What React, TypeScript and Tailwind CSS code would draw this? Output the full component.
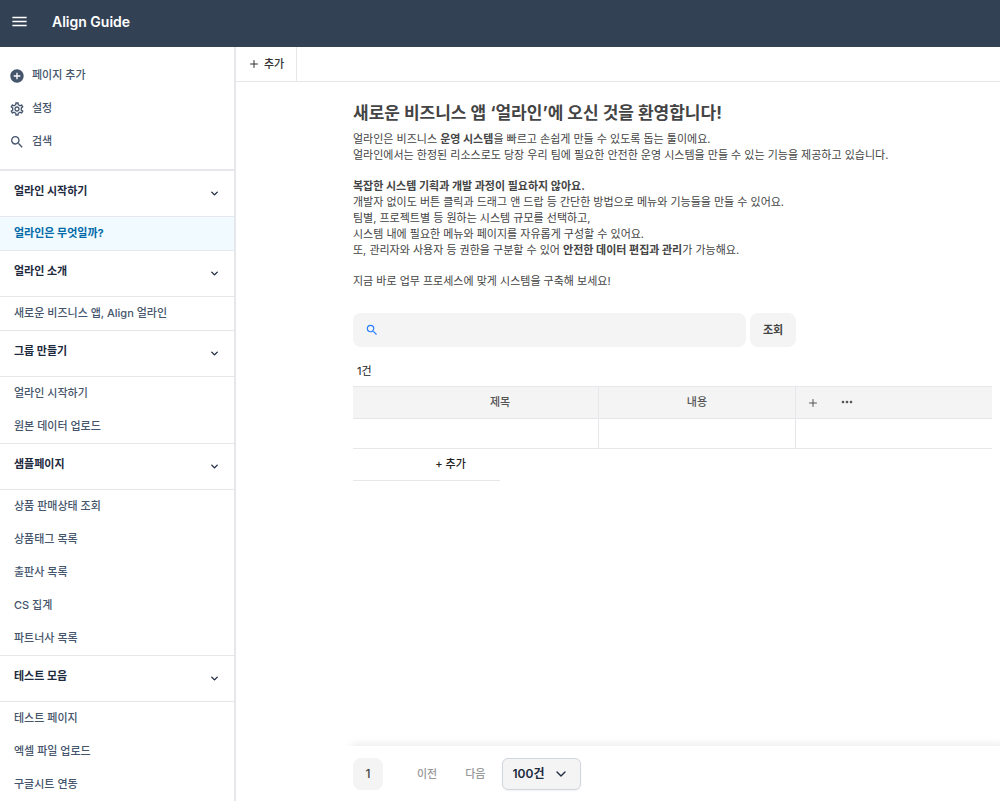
import { useState } from 'react';
import clsx from 'clsx';
import { MdAddCircle, MdMenu, MdMoreHoriz, MdOutlineSettings, MdSearch } from 'react-icons/md';
import { ChevronDown, Plus } from 'lucide-react';

const actions = [
  { label: '페이지 추가', Icon: MdAddCircle },
  { label: '설정', Icon: MdOutlineSettings },
  { label: '검색', Icon: MdSearch },
];

const groups = [
  { title: '얼라인 시작하기', pages: ['얼라인은 무엇일까?'] },
  { title: '얼라인 소개', pages: ['새로운 비즈니스 앱, Align 얼라인'] },
  { title: '그룹 만들기', pages: ['얼라인 시작하기', '원본 데이터 업로드'] },
  {
    title: '샘플페이지',
    pages: ['상품 판매상태 조회', '상품태그 목록', '출판사 목록', 'CS 집계', '파트너사 목록'],
  },
  { title: '테스트 모음', pages: ['테스트 페이지', '엑셀 파일 업로드', '구글시트 연동'] },
];

function Sidebar() {
  const [active, setActive] = useState('얼라인은 무엇일까?');

  return (
    <aside className="w-[236px] shrink-0 overflow-hidden border-r-2 border-gray-200 text-slate-600">
      <div className="border-b border-gray-200 pt-3 pb-[11px]">
        {actions.map(({ label, Icon }) => (
          <button key={label} className="flex h-[33px] w-full items-center gap-[7px] px-[9px] font-medium">
            <Icon className="size-4 text-slate-600" />
            {label}
          </button>
        ))}
      </div>

      <nav>
        {groups.map(({ title, pages }) => (
          <section key={title}>
            <button className="flex h-[47px] w-full items-center justify-between border-y border-gray-200 pr-[14px] pl-[14px] font-bold text-slate-800">
              <span className="pb-1">{title}</span>
              <ChevronDown className="size-[11px]" strokeWidth={3} />
            </button>
            {pages.map((page) => (
              <a
                key={page}
                href="#"
                onClick={() => setActive(page)}
                className={clsx(
                  'flex h-[33px] items-center px-[14px]',
                  page === active ? 'bg-[#f1faff] font-bold text-sky-700' : 'font-medium'
                )}
              >
                {page}
              </a>
            ))}
          </section>
        ))}
      </nav>
    </aside>
  );
}

function Intro() {
  return (
    <div className="flex flex-col gap-[15px] leading-4 text-[#444]">
      <div>
        <h1 className="mb-1.5 text-[17px] leading-6 font-bold">새로운 비즈니스 앱 ‘얼라인’에 오신 것을 환영합니다!</h1>
        <p>
          얼라인은 비즈니스 <b>운영 시스템</b>을 빠르고 손쉽게 만들 수 있도록 돕는 툴이에요.
          <br />
          얼라인에서는 한정된 리소스로도 당장 우리 팀에 필요한 안전한 운영 시스템을 만들 수 있는 기능을 제공하고 있습니다.
        </p>
      </div>
      <p>
        <b>복잡한 시스템 기획과 개발 과정이 필요하지 않아요.</b>
        <br />
        개발자 없이도 버튼 클릭과 드래그 앤 드랍 등 간단한 방법으로 메뉴와 기능들을 만들 수 있어요.
        <br />
        팀별, 프로젝트별 등 원하는 시스템 규모를 선택하고,
        <br />
        시스템 내에 필요한 메뉴와 페이지를 자유롭게 구성할 수 있어요.
        <br />
        또, 관리자와 사용자 등 권한을 구분할 수 있어 <b>안전한 데이터 편집과 관리</b>가 가능해요.
      </p>
      <p>지금 바로 업무 프로세스에 맞게 시스템을 구축해 보세요!</p>
    </div>
  );
}

function DataTable() {
  return (
    <>
      <table className="w-full table-fixed border-collapse text-[#555]">
        <thead>
          <tr className="h-8 border-y border-gray-200 bg-[#f4f4f4]">
            <td className="w-[49px]" />
            <th className="border-r border-gray-200 font-medium">제목</th>
            <th className="border-r border-gray-200 font-medium">내용</th>
            <td>
              <div className="flex items-center gap-5 pl-[11px]">
                <button aria-label="열 추가" className="flex">
                  <Plus className="size-3" strokeWidth={2} />
                </button>
                <button aria-label="더보기" className="flex pb-0.5">
                  <MdMoreHoriz className="size-4" />
                </button>
              </div>
            </td>
          </tr>
        </thead>
        <tbody>
          <tr className="h-[30px] border-b border-gray-200">
            <td />
            <td className="border-r border-gray-200" />
            <td className="border-r border-gray-200" />
            <td />
          </tr>
        </tbody>
      </table>
      <button className="h-8 w-[147px] border-b border-gray-200 pl-12 font-medium text-[#222]">+ 추가</button>
    </>
  );
}

function Pagination() {
  return (
    <footer className="-mr-3 ml-[109px] flex items-center px-2 pt-3 pb-[11px] shadow-[0_-8px_8px_-6px_rgba(0,0,0,0.08)]">
      <button className="h-8 w-[30px] rounded-lg bg-[#f4f4f4] text-[12px] font-medium text-[#444]">1</button>
      <button className="ml-[34px] font-medium text-[#999]">이전</button>
      <button className="ml-7 font-medium text-[#999]">다음</button>
      <div className="relative ml-4">
        <select
          aria-label="페이지당 건수"
          className="h-8 w-[79px] appearance-none rounded-md border border-gray-300 bg-[#f4f4f4] pl-2.5 text-[12px] font-semibold text-slate-800 shadow-xs"
        >
          <option>100건</option>
          <option>50건</option>
        </select>
        <ChevronDown className="pointer-events-none absolute top-2 right-3 size-4 text-slate-800" />
      </div>
    </footer>
  );
}

export default function App() {
  return (
    <div className="flex h-screen flex-col overflow-hidden bg-white font-['Inter','Noto_Sans_CJK_KR',sans-serif] text-[11px]">
      <header className="flex h-[47px] shrink-0 items-center gap-[23px] bg-[#334155] px-2.5 pb-1 text-white">
        <button aria-label="메뉴">
          <MdMenu className="size-[19px]" />
        </button>
        <span className="text-[14px] font-semibold">Align Guide</span>
      </header>

      <div className="flex min-h-0 flex-1">
        <Sidebar />

        <div className="flex min-w-0 flex-1 flex-col">
          <div className="border-b border-gray-200">
            <button className="flex h-[34px] items-center gap-1 border-r border-gray-200 px-3 font-medium text-[#333]">
              <Plus className="size-3" strokeWidth={2} />
              추가
            </button>
          </div>

          <main className="flex-1 pt-[19px] pr-2 pl-[117px]">
            <Intro />

            <form className="mt-6 flex gap-1" onSubmit={(e) => e.preventDefault()}>
              <label className="flex h-[34px] w-[393px] items-center gap-2 rounded-lg bg-[#f4f4f4] px-3">
                <MdSearch className="size-[14px] text-blue-500" />
                <input aria-label="검색어" className="min-w-0 flex-1 bg-transparent outline-none" />
              </label>
              <button className="w-[46px] rounded-lg bg-[#f4f4f4] font-bold text-[#444]">조회</button>
            </form>

            <p className="mt-4 mb-[7px] pl-1 leading-4 text-[#222]">1건</p>
            <DataTable />
          </main>

          <Pagination />
        </div>
      </div>
    </div>
  );
}
